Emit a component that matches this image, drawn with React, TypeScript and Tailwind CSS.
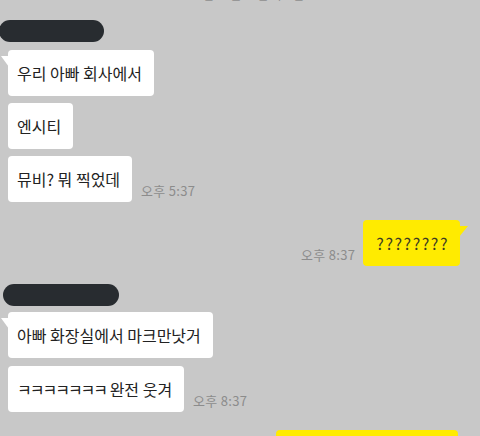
const font = { fontFamily: '"Noto Sans CJK KR", "Noto Sans", sans-serif' };

function NameBar({ width, offset }: { width: string; offset: string }) {
  return <div className={`h-[22px] rounded-full bg-[#282c30] ${width} ${offset}`} />;
}

function LeftBubble({ children, time, tail }: { children: React.ReactNode; time?: string; tail?: boolean }) {
  return (
    <div className="flex items-end pl-[8px]">
      <div className="relative flex h-[46px] items-center rounded-[4px] bg-white pl-[9px] pr-[12px] text-[16px] text-[#222222]">
        {tail && (
          <svg className="absolute left-[-7px] top-[6px]" width="8" height="11" viewBox="0 0 8 11">
            <polygon points="0,0 8,0 8,11" fill="#ffffff" />
          </svg>
        )}
        {children}
      </div>
      {time && <span className="mb-[5px] ml-[9px] text-[13px] leading-none tracking-[0.3px] text-[#8c8c8c]">{time}</span>}
    </div>
  );
}

function RightBubble({ text, time }: { text: string; time: string }) {
  return (
    <div className="flex items-end justify-end pr-[20px]">
      <span className="mb-[5px] mr-[8px] text-[13px] leading-none tracking-[0.3px] text-[#8c8c8c]">{time}</span>
      <div className="relative flex h-[46px] items-center rounded-[4px] bg-[#ffeb00] pl-[13px] pr-[11px] text-[16px] tracking-[1.5px] text-[#3b3a22]">
        <svg className="absolute right-[-8px] top-[6px]" width="9" height="11" viewBox="0 0 9 11">
          <polygon points="0,0 9,0 0,11" fill="#ffeb00" />
        </svg>
        {text}
      </div>
    </div>
  );
}

export default function App() {
  return (
    <div className="h-[436px] w-[480px] overflow-hidden bg-[#c8c8c8]" style={font}>
      <div className="mt-[-14px] text-center text-[12px] leading-[17px] text-[#8f8f8f]">2019년 11월 14일 목요일</div>

      <div className="mt-[17px] flex flex-col">
        <NameBar width="w-[105px]" offset="ml-[-1px]" />
        <div className="mt-[8px] flex flex-col gap-[7px]">
          <LeftBubble tail>우리 아빠 회사에서</LeftBubble>
          <LeftBubble>엔시티</LeftBubble>
          <LeftBubble time="오후 5:37">뮤비? 뭐 찍었데</LeftBubble>
        </div>

        <div className="mt-[18px]">
          <RightBubble text="????????" time="오후 8:37" />
        </div>

        <div className="mt-[18px]">
          <NameBar width="w-[116px]" offset="ml-[3px]" />
        </div>
        <div className="mt-[6px] flex flex-col gap-[8px]">
          <LeftBubble tail>아빠 화장실에서 마크만낫거</LeftBubble>
          <LeftBubble time="오후 8:37">
            <span className="tracking-[-2px]">ㅋㅋㅋㅋㅋㅋㅋ</span>
            <span>&nbsp;완전 웃겨</span>
          </LeftBubble>
        </div>

        <div className="mt-[18px] flex justify-end pr-[22px]">
          <div className="h-[46px] w-[182px] rounded-[4px] bg-[#ffeb00]" />
        </div>
      </div>
    </div>
  );
}
